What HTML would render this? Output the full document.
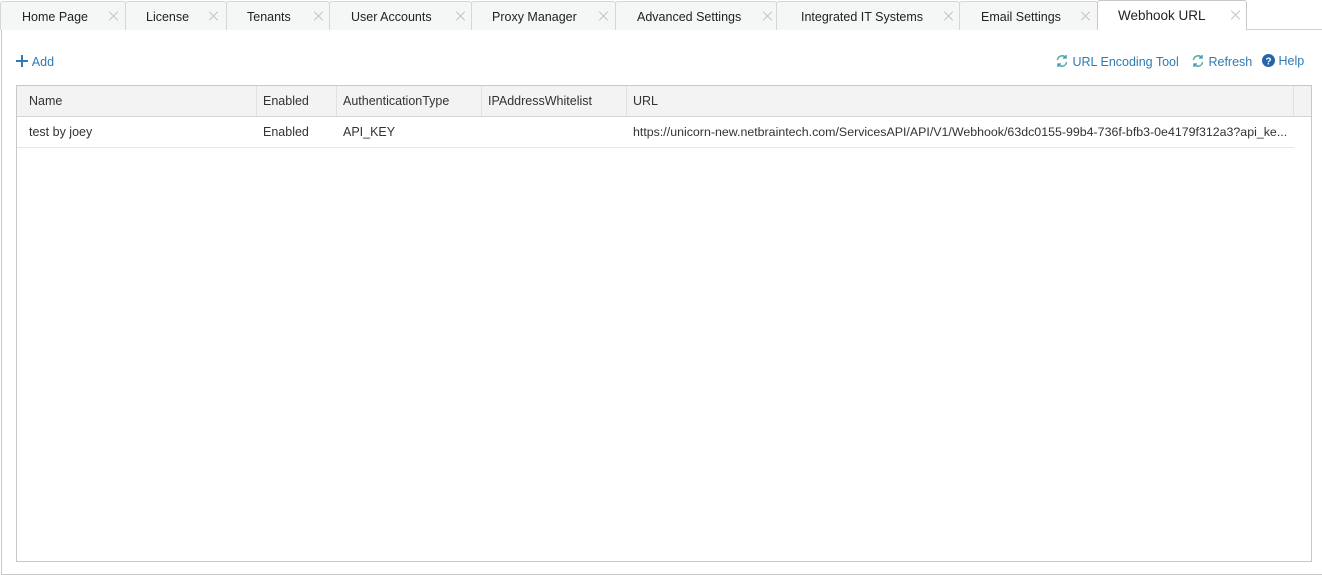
<!DOCTYPE html>
<html><head><meta charset="utf-8"><style>
*{box-sizing:border-box;margin:0;padding:0}
body{width:1322px;height:575px;background:#fff;font-family:"Liberation Sans",sans-serif;font-size:12.5px;color:#333;position:relative;overflow:hidden}
.tab{position:absolute;top:1px;height:29px;background:#f5f6f6;border:1px solid #d6d6d6;border-bottom:none;border-radius:3px 3px 0 0;line-height:30px;font-size:12.5px;color:#222}
.tab span{position:absolute;top:0}
.tab i{position:absolute;top:9px;width:10px;height:10px}
.tab i:before,.tab i:after{content:"";position:absolute;left:4px;top:-1px;width:1px;height:12px;background:#c4c4c4;transform:rotate(45deg)}
.tab i:after{transform:rotate(-45deg)}
.tab.act{background:#fff;top:0;height:30px;border-color:#c8c8c8;font-size:13.5px;line-height:29px}
.line{position:absolute;left:0;right:0;top:29px;height:1px;background:#d0d0d0}
.outer{position:absolute;left:1px;top:29px;width:1322px;height:546px;border-left:1px solid #c8c8c8;border-bottom:1px solid #c8c8c8}
.link{position:absolute;top:54px;color:#2d7bb5;font-size:12.5px}
.grid{position:absolute;left:16px;top:85px;width:1296px;height:477px;border:1px solid #c8c8c8}
.hdr{position:absolute;left:0;top:0;width:1294px;height:31px;background:#f3f3f3;border-bottom:1px solid #d4d4d4}
.c{position:absolute;top:0;height:30px;line-height:30px;padding-left:12px;border-right:1px solid #e2e2e2;white-space:nowrap;overflow:hidden}
.row{position:absolute;left:0;top:31px;width:1277px;height:31px;border-bottom:1px solid #e6e6e6}
.row .c{border-right:none;line-height:30px}
</style></head><body>
<div class="line"></div>
<div class="outer"></div>
<div class="tab" style="left:0;width:126px"><span style="left:21px">Home Page</span><i style="left:108px"></i></div>
<div class="tab" style="left:125px;width:102px"><span style="left:20px">License</span><i style="left:83px"></i></div>
<div class="tab" style="left:226px;width:104px"><span style="left:20px">Tenants</span><i style="left:87px"></i></div>
<div class="tab" style="left:329px;width:143px"><span style="left:21px">User Accounts</span><i style="left:126px"></i></div>
<div class="tab" style="left:471px;width:145px"><span style="left:20px">Proxy Manager</span><i style="left:127px"></i></div>
<div class="tab" style="left:615px;width:162px"><span style="left:21px">Advanced Settings</span><i style="left:147px"></i></div>
<div class="tab" style="left:776px;width:184px"><span style="left:24px">Integrated IT Systems</span><i style="left:167px"></i></div>
<div class="tab" style="left:959px;width:139px"><span style="left:21px">Email Settings</span><i style="left:121px"></i></div>
<div class="tab act" style="left:1097px;width:150px"><span style="left:20px">Webhook URL</span><i style="left:133px"></i></div>

<div class="link" style="left:15px"><svg width="14" height="14" style="vertical-align:-2px" viewBox="0 0 14 14"><path d="M7 1v12M1 7h12" stroke="#2d7bb5" stroke-width="2"/></svg> Add</div>
<div class="link" style="left:1055px"><svg width="14" height="14" style="vertical-align:-2px" viewBox="0 0 14 14"><path d="M2.5 6a4.5 4.5 0 0 1 8-2.5M11.5 8a4.5 4.5 0 0 1-8 2.5" stroke="#4caf8f" stroke-width="1.4" fill="none"/><path d="M11 1v3h-3M3 13v-3h3" stroke="#3a8fc8" stroke-width="1.3" fill="none"/></svg> URL Encoding Tool</div>
<div class="link" style="left:1191px"><svg width="14" height="14" style="vertical-align:-2px" viewBox="0 0 14 14"><path d="M2.5 6a4.5 4.5 0 0 1 8-2.5M11.5 8a4.5 4.5 0 0 1-8 2.5" stroke="#4caf8f" stroke-width="1.4" fill="none"/><path d="M11 1v3h-3M3 13v-3h3" stroke="#3a8fc8" stroke-width="1.3" fill="none"/></svg> Refresh</div>
<div class="link" style="left:1262px"><svg width="13" height="13" style="vertical-align:-2px" viewBox="0 0 13 13"><circle cx="6.5" cy="6.5" r="6.5" fill="#2466a8"/><text x="6.5" y="10.5" font-size="10" font-weight="bold" fill="#fff" text-anchor="middle" font-family="Liberation Sans">?</text></svg> Help</div>

<div class="grid">
<div class="hdr">
<div class="c" style="left:0;width:240px">Name</div>
<div class="c" style="left:240px;width:80px;padding-left:6px">Enabled</div>
<div class="c" style="left:320px;width:145px;padding-left:6px">AuthenticationType</div>
<div class="c" style="left:465px;width:145px;padding-left:6px">IPAddressWhitelist</div>
<div class="c" style="left:610px;width:667px;padding-left:6px">URL</div>
</div>
<div class="row">
<div class="c" style="left:0;width:240px">test by joey</div>
<div class="c" style="left:240px;width:80px;padding-left:6px">Enabled</div>
<div class="c" style="left:320px;width:145px;padding-left:6px">API_KEY</div>
<div class="c" style="left:610px;width:667px;padding-left:6px;font-size:12.4px">https://unicorn-new.netbraintech.com/ServicesAPI/API/V1/Webhook/63dc0155-99b4-736f-bfb3-0e4179f312a3?api_ke...</div>
</div>
</div>
</body></html>
